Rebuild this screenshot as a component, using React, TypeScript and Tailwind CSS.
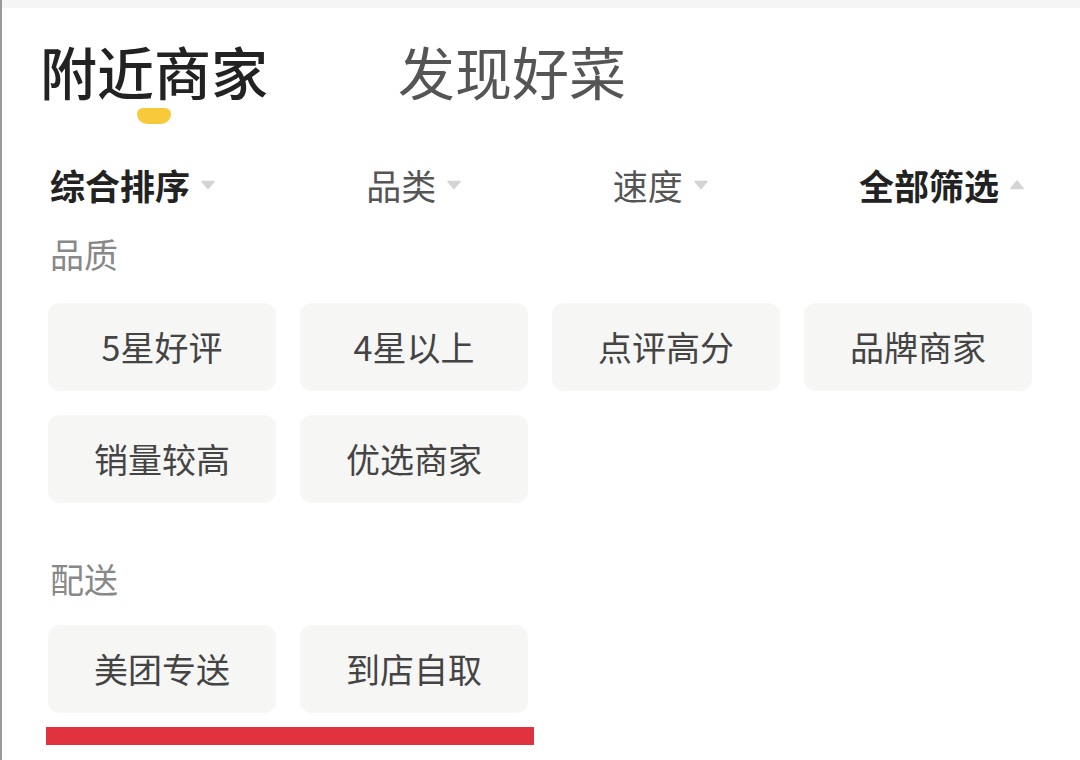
import React from 'react';

const FONT = { fontFamily: '"Noto Sans CJK SC", "Noto Sans", sans-serif' };

const Caret: React.FC<{ up?: boolean }> = ({ up }) => (
  <svg width="16" height="10" viewBox="0 0 16 10" className="ml-[10px]">
    {up ? (
      <path d="M2 8.5 Q8 1 8 1 Q8 1 14 8.5 Z" fill="#d4d4d4" stroke="#d4d4d4" strokeWidth="1.5" strokeLinejoin="round" />
    ) : (
      <path d="M2 1.5 L14 1.5 L8 8.5 Z" fill="#d4d4d4" stroke="#d4d4d4" strokeWidth="1.5" strokeLinejoin="round" />
    )}
  </svg>
);

const filters = [
  { label: '综合排序', bold: true },
  { label: '品类' },
  { label: '速度' },
  { label: '全部筛选', bold: true, up: true },
];

const quality = ['5星好评', '4星以上', '点评高分', '品牌商家', '销量较高', '优选商家'];
const delivery = ['美团专送', '到店自取'];

const Chip: React.FC<{ text: string }> = ({ text }) => (
  <div className="h-[88px] rounded-[12px] bg-[#f6f6f4] flex items-center justify-center text-[34px] text-[#444] leading-none">
    {text}
  </div>
);

export default function App() {
  return (
    <div className="w-[1080px] h-[760px] bg-white overflow-hidden flex flex-col border-l-[2px] border-[#9a9a9a]" style={FONT}>
      <div className="h-[8px] bg-[#f5f5f5] shrink-0" />

      <div className="flex items-start pl-[38px] pt-[34px]">
        <div className="flex flex-col items-center">
          <span className="text-[57px] leading-none text-[#222] font-medium">附近商家</span>
          <span className="mt-[9px] w-[34px] h-[16px] bg-[#f8c93a] rounded-t-[10px] rounded-b-[17px]" />
        </div>
        <span className="ml-[130px] text-[57px] leading-none text-[#555]">发现好菜</span>
      </div>

      <div className="flex justify-between items-center pl-[48px] pr-[55px] mt-[43px]">
        {filters.map((f) => (
          <div key={f.label} className="flex items-center">
            <span className={`text-[35px] leading-none ${f.bold ? 'font-bold text-[#222]' : 'text-[#555]'}`}>{f.label}</span>
            <Caret up={f.up} />
          </div>
        ))}
      </div>

      <div className="px-[46px]">
        <div className="mt-[35px] text-[34px] leading-none text-[#888] pl-[2px]">品质</div>
        <div className="mt-[32px] grid grid-cols-4 gap-x-[24px] gap-y-[24px] w-[984px]">
          {quality.map((q) => (
            <Chip key={q} text={q} />
          ))}
        </div>

        <div className="mt-[59px] text-[34px] leading-none text-[#888] pl-[2px]">配送</div>
        <div className="mt-[29px] grid grid-cols-4 gap-x-[24px] w-[984px]">
          {delivery.map((q) => (
            <Chip key={q} text={q} />
          ))}
        </div>
        <div className="mt-[14px] -ml-[2px] w-[488px] h-[18px] bg-[#e0333f]" />
      </div>
    </div>
  );
}
